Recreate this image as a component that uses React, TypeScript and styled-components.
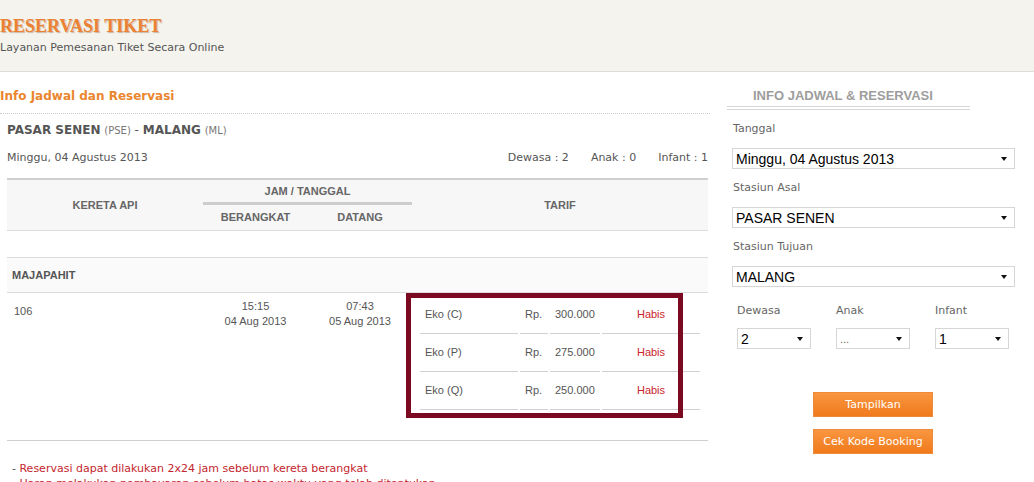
import styled, { createGlobalStyle } from "styled-components";

const GlobalStyle = createGlobalStyle`
  * {
    box-sizing: border-box;
  }
  body {
    margin: 0;
    background: #fff;
    font-family: "DejaVu Sans", Verdana, sans-serif;
    font-size: 11px;
    color: #555;
  }
`;

const fares = [
  { kelas: "Eko (C)", harga: "300.000" },
  { kelas: "Eko (P)", harga: "275.000" },
  { kelas: "Eko (Q)", harga: "250.000" },
];

function App(): JSX.Element {
  return (
    <Page>
      <GlobalStyle />

      {/** Kepala halaman */}
      <Header>
        <SiteTitle>RESERVASI TIKET</SiteTitle>
        <SiteTagline>Layanan Pemesanan Tiket Secara Online</SiteTagline>
      </Header>

      <Body>
        {/** Kolom utama: hasil pencarian jadwal */}
        <Main>
          <SectionTitle>Info Jadwal dan Reservasi</SectionTitle>

          <Content>
            <Route>
              <StationName>PASAR SENEN</StationName> <StationCode>(PSE)</StationCode> -{" "}
              <StationName>MALANG</StationName> <StationCode>(ML)</StationCode>
            </Route>

            <TripMeta>
              <span>Minggu, 04 Agustus 2013</span>
              <PaxList>
                <span>Dewasa : 2</span>
                <span>Anak : 0</span>
                <span>Infant : 1</span>
              </PaxList>
            </TripMeta>

            <ScheduleTable>
              <colgroup>
                <col style={{ width: 196 }} />
                <col style={{ width: 105 }} />
                <col style={{ width: 104 }} />
                <col style={{ width: 296 }} />
              </colgroup>
              <thead>
                <tr>
                  <HeadCell rowSpan={2} $bottom>
                    KERETA API
                  </HeadCell>
                  <HeadCell colSpan={2} $group>
                    JAM / TANGGAL
                  </HeadCell>
                  <HeadCell rowSpan={2} $bottom>
                    TARIF
                  </HeadCell>
                </tr>
                <tr>
                  <HeadCell $bottom $sub>
                    BERANGKAT
                  </HeadCell>
                  <HeadCell $bottom $sub>
                    DATANG
                  </HeadCell>
                </tr>
              </thead>
              <tbody>
                <tr>
                  <SpacerCell colSpan={4} />
                </tr>
                <tr>
                  <TrainNameCell colSpan={4}>MAJAPAHIT</TrainNameCell>
                </tr>
                <tr>
                  <TrainNoCell>106</TrainNoCell>
                  <TimeCell>
                    15:15
                    <br />
                    04 Aug 2013
                  </TimeCell>
                  <TimeCell>
                    07:43
                    <br />
                    05 Aug 2013
                  </TimeCell>
                  <FareCell>
                    <FareWrap>
                      <FareTable>
                        <tbody>
                          {fares.map((fare) => (
                            <tr key={fare.kelas}>
                              <FareItem $w={98}>{fare.kelas}</FareItem>
                              <FareItem $w={28}>Rp.</FareItem>
                              <FareItem $w={50}>{fare.harga}</FareItem>
                              <FareItem $w={98} $status>
                                Habis
                              </FareItem>
                            </tr>
                          ))}
                        </tbody>
                      </FareTable>
                      <Highlight />
                    </FareWrap>
                  </FareCell>
                </tr>
              </tbody>
            </ScheduleTable>

            <Notes>
              <NoteLine>
                - <NoteText>Reservasi dapat dilakukan 2x24 jam sebelum kereta berangkat</NoteText>
              </NoteLine>
              <NoteLine>
                - <NoteText>Harap melakukan pembayaran sebelum batas waktu yang telah ditentukan</NoteText>
              </NoteLine>
            </Notes>
          </Content>
        </Main>

        {/** Kolom samping: form pencarian */}
        <Sidebar>
          <SideTitle>INFO JADWAL &amp; RESERVASI</SideTitle>

          <FieldLabel>Tanggal</FieldLabel>
          <SelectBox>
            Minggu, 04 Agustus 2013
            <Caret />
          </SelectBox>

          <FieldLabel>Stasiun Asal</FieldLabel>
          <SelectBox>
            PASAR SENEN
            <Caret />
          </SelectBox>

          <FieldLabel>Stasiun Tujuan</FieldLabel>
          <SelectBox>
            MALANG
            <Caret />
          </SelectBox>

          <PaxGrid>
            <PaxField>
              <PaxLabel>Dewasa</PaxLabel>
              <SmallSelect>
                2
                <Caret />
              </SmallSelect>
            </PaxField>
            <PaxField>
              <PaxLabel>Anak</PaxLabel>
              <SmallSelect $muted>
                ...
                <Caret />
              </SmallSelect>
            </PaxField>
            <PaxField>
              <PaxLabel>Infant</PaxLabel>
              <SmallSelect>
                1
                <Caret />
              </SmallSelect>
            </PaxField>
          </PaxGrid>

          <ButtonStack>
            <ActionButton>Tampilkan</ActionButton>
            <ActionButton>Cek Kode Booking</ActionButton>
          </ButtonStack>
        </Sidebar>
      </Body>
    </Page>
  );
}

export default App;

const Page = styled.div`
  width: 1034px;
  height: 482px;
  overflow: hidden;
`;

const Header = styled.header`
  height: 72px;
  padding-top: 15px;
  background: #f4f3ed;
  border-bottom: 1px solid #dedcd4;
`;

const SiteTitle = styled.h1`
  margin: 0;
  font-family: "Liberation Serif", "Times New Roman", serif;
  font-size: 18px;
  line-height: 22px;
  font-weight: bold;
  color: #ec8134;
  text-shadow: 1px 1px 1px rgba(120, 70, 20, 0.35);
`;

const SiteTagline = styled.div`
  margin-top: 4px;
  line-height: 14px;
  font-size: 11px;
  color: #555;
`;

const Body = styled.div`
  display: flex;
  align-items: flex-start;
`;

const Main = styled.main`
  width: 710px;
`;

const SectionTitle = styled.h2`
  margin: 15px 0 0;
  padding-bottom: 8px;
  border-bottom: 1px dotted #ccc;
  font-size: 12px;
  line-height: 18px;
  font-weight: bold;
  color: #ea8630;
`;

const Content = styled.div`
  padding: 0 2px 0 7px;
`;

const Route = styled.div`
  margin-top: 8px;
  line-height: 16px;
  font-size: 12px;
  color: #555;
`;

const StationName = styled.b`
  font-weight: bold;
`;

const StationCode = styled.span`
  font-size: 10px;
  color: #777;
`;

const TripMeta = styled.div`
  display: flex;
  justify-content: space-between;
  margin-top: 11px;
  line-height: 16px;
  font-size: 11px;
`;

const PaxList = styled.div`
  display: flex;
  gap: 22px;
`;

const ScheduleTable = styled.table`
  width: 701px;
  margin-top: 12px;
  border-collapse: collapse;
  table-layout: fixed;
  border-top: 2px solid #cfcfcf;
  font-family: "Liberation Sans", Arial, sans-serif;
  font-size: 11px;
  color: #555;
`;

const HeadCell = styled.th<{ $group?: boolean; $sub?: boolean; $bottom?: boolean }>`
  padding: 0;
  background: #f7f7f7;
  color: #666;
  font-weight: bold;
  text-align: center;
  height: ${(p) => (p.$group ? "24px" : p.$sub ? "27px" : "auto")};
  border-bottom: ${(p) =>
    p.$group ? "3px solid #cdcdcd" : p.$bottom ? "1px solid #dcdcdc" : "none"};
`;

const SpacerCell = styled.td`
  height: 27px;
  padding: 0;
  border-bottom: 1px solid #dcdcdc;
`;

const TrainNameCell = styled.td`
  height: 35px;
  padding: 0 0 0 5px;
  background: #fafafa;
  font-weight: bold;
  color: #555;
  border-bottom: 1px solid #dcdcdc;
`;

const TrainNoCell = styled.td`
  vertical-align: top;
  padding: 11px 0 0 7px;
  line-height: 15px;
  border-bottom: 1px solid #cfcfcf;
`;

const TimeCell = styled.td`
  vertical-align: top;
  padding: 6px 0 0;
  line-height: 15px;
  text-align: center;
  border-bottom: 1px solid #cfcfcf;
`;

const FareCell = styled.td`
  vertical-align: top;
  padding: 3px 6px 30px;
  border-bottom: 1px solid #cfcfcf;
`;

const FareWrap = styled.div`
  position: relative;
`;

const FareTable = styled.table`
  width: 284px;
  border-collapse: separate;
  border-spacing: 2px 0;
  table-layout: fixed;
`;

const FareItem = styled.td<{ $w: number; $status?: boolean }>`
  width: ${(p) => p.$w}px;
  height: 38px;
  padding: ${(p) => (p.$status ? "0" : "0 0 0 5px")};
  border-bottom: 1px solid #d0d0d0;
  color: ${(p) => (p.$status ? "#c9252c" : "#555")};
  text-align: ${(p) => (p.$status ? "center" : "left")};
`;

const Highlight = styled.div`
  position: absolute;
  left: -12px;
  top: -3px;
  width: 277px;
  height: 125px;
  border: 5px solid #7b0a20;
  pointer-events: none;
`;

const Notes = styled.div`
  margin: 20px 0 0 5px;
`;

const NoteLine = styled.p`
  margin: 0;
  line-height: 15px;
  color: #555;
`;

const NoteText = styled.span`
  color: #c4262e;
`;

const Sidebar = styled.aside`
  margin-left: 17px;
  width: 307px;
`;

const SideTitle = styled.h3`
  width: 243px;
  margin: 15px 0 0;
  padding: 0 0 2px 26px;
  height: 23px;
  border-bottom: 4px double #d6d6d6;
  font-family: "Liberation Sans", Arial, sans-serif;
  font-size: 13px;
  line-height: 18px;
  font-weight: bold;
  color: #9d9d9d;
`;

const FieldLabel = styled.div`
  margin-top: 11px;
  padding-left: 6px;
  line-height: 16px;
  color: #666;
`;

const SelectBox = styled.div`
  display: flex;
  align-items: center;
  justify-content: space-between;
  width: 283px;
  height: 21px;
  margin: 11px 0 11px 5px;
  padding: 0 7px 0 3px;
  background: #fff;
  border: 1px solid #d6d6d6;
  font-family: "Liberation Sans", Arial, sans-serif;
  font-size: 14px;
  color: #000;
`;

const Caret = styled.span`
  width: 0;
  height: 0;
  border-left: 3.5px solid transparent;
  border-right: 3.5px solid transparent;
  border-top: 4px solid #111;
`;

const PaxGrid = styled.div`
  display: grid;
  grid-template-columns: repeat(3, 99px);
  margin-top: 16px;
  padding-left: 10px;
`;

const PaxField = styled.div`
  display: flex;
  flex-direction: column;
`;

const PaxLabel = styled.div`
  line-height: 16px;
  color: #666;
`;

const SmallSelect = styled.div<{ $muted?: boolean }>`
  display: flex;
  align-items: center;
  justify-content: space-between;
  width: 74px;
  height: 21px;
  margin-top: 9px;
  padding: 0 7px 0 3px;
  background: #fff;
  border: 1px solid #d6d6d6;
  font-family: "Liberation Sans", Arial, sans-serif;
  font-size: ${(p) => (p.$muted ? "11px" : "14px")};
  color: ${(p) => (p.$muted ? "#666" : "#000")};
`;

const ButtonStack = styled.div`
  display: flex;
  flex-direction: column;
  gap: 12px;
  margin-top: 43px;
  padding-left: 86px;
`;

const ActionButton = styled.button`
  width: 120px;
  height: 25px;
  padding: 0;
  border: 1px solid #ee8a3a;
  background: linear-gradient(#f9963f, #f07a1c);
  font-family: "DejaVu Sans", Verdana, sans-serif;
  font-size: 11px;
  color: #fff;
  cursor: pointer;
`;
